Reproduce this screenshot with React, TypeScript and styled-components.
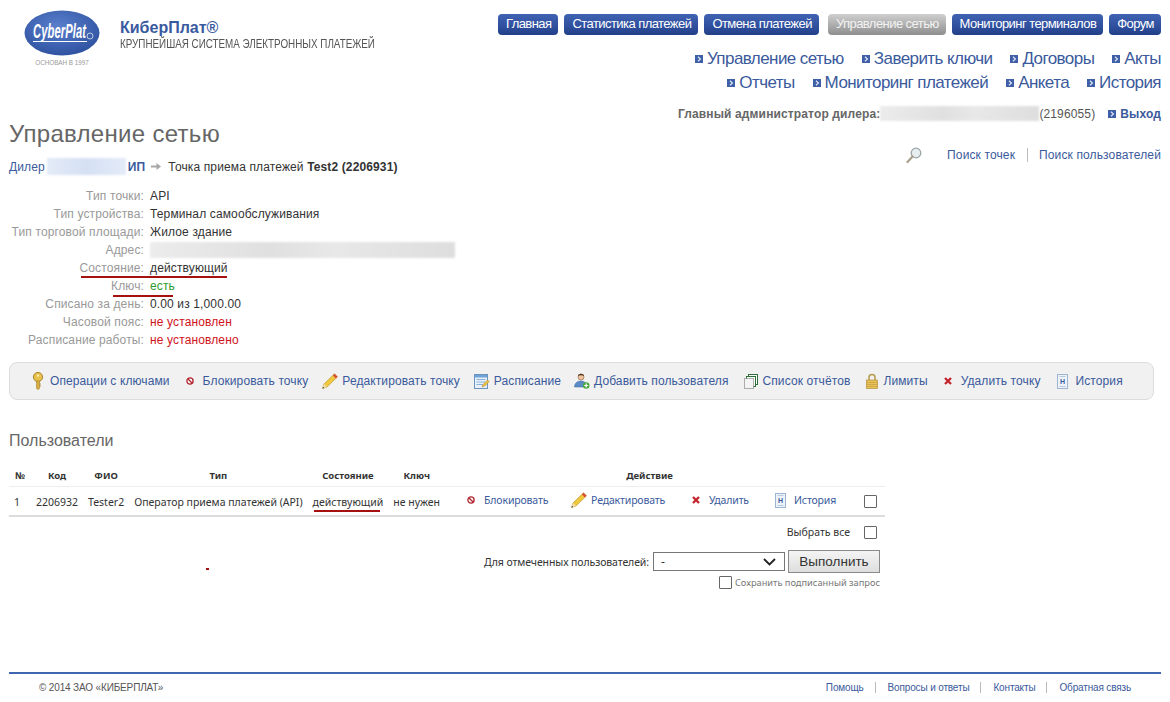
import React, { FC } from 'react';
import styled, { createGlobalStyle } from 'styled-components';

const GlobalStyle = createGlobalStyle`
  html, body {
    margin: 0;
    padding: 0;
    background: #fff;
  }
  body {
    font-family: "Liberation Sans", Arial, sans-serif;
    font-size: 12px;
    letter-spacing: 0.13px;
    color: #333;
  }
  a {
    color: #3a5a9c;
    text-decoration: none;
  }
`;

const Page = styled.div`
  box-sizing: border-box;
  display: flex;
  flex-direction: column;
  width: 1170px;
  height: 702px;
  padding: 0 9px;
  overflow: hidden;
  position: relative;
`;

const Header = styled.header`
  display: flex;
  justify-content: space-between;
  flex: none;
  height: 121px;
`;

const Brand = styled.div`
  display: flex;
  gap: 20px;
  padding: 10px 0 0 15px;
`;

const LogoBox = styled.div`
  width: 76px;
  display: flex;
  flex-direction: column;
  align-items: center;
`;

const Founded = styled.div`
  font-size: 6.3px;
  line-height: 10px;
  margin-top: 2px;
  letter-spacing: 0;
  color: #999;
`;

const BrandText = styled.div`
  padding-top: 10px;
`;

const BrandName = styled.div`
  font-size: 16px;
  line-height: 16px;
  font-weight: 700;
  letter-spacing: 0;
  color: #3a5aa0;
`;

const BrandSub = styled.div`
  font-size: 12px;
  line-height: 12px;
  margin-top: 2px;
  letter-spacing: 0;
  white-space: nowrap;
  color: #555;
  transform: scaleX(0.82);
  transform-origin: left center;
`;

const HeaderRight = styled.div`
  display: flex;
  flex-direction: column;
  align-items: flex-end;
  padding-top: 14px;
`;

const MainNav = styled.nav`
  display: flex;
  gap: 6px;
`;

const NavButton = styled.a<{ $active?: boolean; $push?: boolean }>`
  display: block;
  height: 21px;
  line-height: 20px;
  padding: 0 7px 0 8px;
  margin-left: ${(p) => (p.$push ? '3px' : '0')};
  border-radius: 4px;
  color: ${(p) => (p.$active ? '#f2f2f2' : '#fff')};
  font-size: 13px;
  letter-spacing: -0.56px;
  background: ${(p) =>
    p.$active
      ? 'linear-gradient(#cfcfcf, #a8a8a8 60%, #8e8e8e)'
      : 'linear-gradient(#3f62b2, #2f4f9e 60%, #223f86)'};
`;

const SubNav = styled.div`
  display: flex;
  justify-content: flex-end;
  gap: 18px;
  font-size: 17px;
  line-height: 24px;
  letter-spacing: -0.57px;
`;

const SubNavFirst = styled(SubNav)`
  margin-top: 12px;
`;

const BulletLink = styled.a`
  display: flex;
  align-items: center;
  gap: 4px;
`;

const UserLine = styled.div`
  display: flex;
  align-items: center;
  margin-top: 11px;
  line-height: 14px;
  color: #555;
`;

const UserRole = styled.b`
  color: #666;
`;

const Blurred = styled.span<{ $w: number; $h?: number; $blue?: boolean }>`
  display: inline-block;
  flex: none;
  width: ${(p) => p.$w}px;
  height: ${(p) => p.$h ?? 15}px;
  background: ${(p) =>
    p.$blue
      ? 'linear-gradient(to right, #e4ebf8, #d5e0f4 50%, #e4ebf8)'
      : 'linear-gradient(to right, #ececec, #e0e0e0 40%, #e8e8e8 60%, #dedede)'};
  filter: blur(1px);
`;

const LogoutLink = styled.a`
  display: flex;
  align-items: center;
  gap: 4px;
  margin-left: 13px;
  font-weight: 700;
`;

const TitleRow = styled.div`
  display: flex;
  justify-content: space-between;
`;

const Title = styled.h1`
  margin: 0;
  font-size: 24px;
  line-height: 26px;
  font-weight: 400;
  letter-spacing: 0.3px;
  color: #666;
`;

const Crumbs = styled.div`
  display: flex;
  align-items: center;
  gap: 2px;
  margin-top: 11px;
  line-height: 14px;
  color: #333;
`;

const CrumbArrow = styled.svg`
  margin: 0 5px 0 4px;
`;

const Search = styled.div`
  display: flex;
  align-items: center;
  padding-top: 27px;
  height: 14px;
`;

const SearchLink = styled.a<{ $divider?: boolean }>`
  line-height: 14px;
  margin-left: ${(p) => (p.$divider ? '12px' : '25px')};
  padding-left: ${(p) => (p.$divider ? '11px' : '0')};
  border-left: ${(p) => (p.$divider ? '1px solid #bbb' : 'none')};
`;

const InfoList = styled.dl`
  margin: 12px 0 0;
  display: grid;
  grid-template-columns: 135px auto;
  grid-auto-rows: 18.04px;
  column-gap: 6px;
  width: 460px;
  line-height: 18px;
`;

const InfoLabel = styled.dt`
  color: #999;
  text-align: right;
  white-space: nowrap;
`;

const InfoValue = styled.dd<{ $tone?: 'ok' | 'bad' }>`
  margin: 0;
  color: ${(p) => (p.$tone === 'ok' ? '#2e9a2e' : p.$tone === 'bad' ? '#d0121b' : '#333')};
  display: flex;
  align-items: center;
`;

/* red pen marks drawn over the screenshot content */
const PenMark = styled.div<{ $w: number; $h: number; $top: number; $left: number }>`
  position: absolute;
  top: ${(p) => p.$top}px;
  left: ${(p) => p.$left}px;
  width: ${(p) => p.$w}px;
  height: ${(p) => p.$h}px;
  background: #a5110f;
`;

const Toolbar = styled.div`
  box-sizing: border-box;
  display: flex;
  align-items: center;
  flex: none;
  width: 1145px;
  height: 38px;
  margin-top: 13px;
  padding: 0 0 0 22px;
  border: 1px solid #ddd;
  border-radius: 8px;
  background: #f1f1f1;
  letter-spacing: 0.1px;
`;

const ToolItem = styled.a<{ $gap: number; $ml: number }>`
  display: flex;
  align-items: center;
  gap: ${(p) => p.$gap}px;
  margin-left: ${(p) => p.$ml}px;
  white-space: nowrap;
`;

const SectionTitle = styled.h2`
  margin: 32px 0 0;
  font-size: 16px;
  line-height: 18px;
  font-weight: 400;
  letter-spacing: 0;
  color: #666;
`;

const Table = styled.table`
  align-self: flex-start;
  border-collapse: collapse;
  margin-top: 17px;
  font-family: "Noto Sans", sans-serif;
  font-size: 10.5px;
  letter-spacing: 0;
`;

const Th = styled.th<{ $w?: number }>`
  box-sizing: border-box;
  height: 19px;
  width: ${(p) => (p.$w ? `${p.$w}px` : 'auto')};
  padding: 0 5px 3px;
  font-size: 9.5px;
  font-weight: 700;
  color: #333;
  text-align: center;
  white-space: nowrap;
  border-bottom: 1px solid #eee;
`;

const Td = styled.td`
  box-sizing: border-box;
  height: 30px;
  padding: 1px 5px 0;
  color: #333;
  white-space: nowrap;
  border-bottom: 2px solid #ddd;
`;

const ActionTd = styled(Td)`
  padding: 0 0 0 22px;
`;

const CheckTd = styled(Td)`
  padding: 0 8px 0 10px;
`;

const Actions = styled.div`
  display: flex;
  align-items: center;
  margin-top: -2px;
  letter-spacing: -0.15px;
`;

const ActionLink = styled.a<{ $w: number; $gap: number }>`
  display: flex;
  align-items: center;
  gap: ${(p) => p.$gap}px;
  width: ${(p) => p.$w}px;
`;

const Check = styled.span`
  box-sizing: border-box;
  display: block;
  flex: none;
  width: 13px;
  height: 13px;
  background: #fff;
  border: 1px solid #666;
  border-radius: 1px;
`;

const BulkArea = styled.div`
  display: flex;
  flex-direction: column;
  align-items: flex-end;
  width: 871px;
  font-family: "Noto Sans", sans-serif;
  font-size: 10.5px;
  letter-spacing: 0;
  color: #333;
`;

const SelectAll = styled.div`
  display: flex;
  align-items: center;
  gap: 14px;
  height: 14px;
  margin-top: 8px;
  padding-right: 3px;
`;

const BulkRow = styled.div`
  display: flex;
  align-items: center;
  margin-top: 11px;
`;

const BulkLabel = styled.span`
  letter-spacing: -0.1px;
`;

const FakeSelect = styled.div`
  box-sizing: border-box;
  display: flex;
  align-items: center;
  justify-content: space-between;
  width: 132px;
  height: 19px;
  margin: 0 3px 0 4px;
  padding: 0 8px 0 7px;
  border: 1px solid #777;
  background: #fff;
  font-size: 12px;
`;

const RunButton = styled.button`
  box-sizing: border-box;
  width: 92px;
  height: 23px;
  padding: 0;
  border: 1px solid #8a8a8a;
  background: linear-gradient(#f4f4f4, #dedede);
  color: #333;
  font-family: "Liberation Sans", Arial, sans-serif;
  font-size: 13.5px;
`;

const SaveSigned = styled.div`
  display: flex;
  align-items: center;
  gap: 3px;
  margin-top: 3px;
  font-size: 9.25px;
  color: #777;
`;

const Footer = styled.footer`
  display: flex;
  justify-content: space-between;
  align-items: flex-start;
  flex: none;
  box-sizing: border-box;
  height: 30px;
  margin-top: auto;
  padding: 8px 30px 0;
  border-top: 2px solid #3f67b0;
  font-size: 10px;
  line-height: 11px;
  letter-spacing: -0.15px;
  color: #555;
`;

const FooterLinks = styled.div`
  display: flex;
`;

const FooterLink = styled.a`
  padding: 0 11px 0 12px;
  border-left: 1px solid #bbb;
  &:first-child {
    border-left: none;
  }
  &:last-child {
    padding-right: 0;
  }
`;

const Logo: FC = () => (
  <svg width="76" height="46" viewBox="0 0 76 46">
    <defs>
      <radialGradient id="lg" cx="45%" cy="35%" r="70%">
        <stop offset="0" stopColor="#5a80cc" />
        <stop offset="1" stopColor="#2c4f9e" />
      </radialGradient>
    </defs>
    <ellipse cx="38" cy="23" rx="37.5" ry="22.5" fill="url(#lg)" />
    <text
      transform="translate(9 28) scale(0.86 1.5)"
      fontFamily="Liberation Sans"
      fontSize="13"
      fontStyle="italic"
      fontWeight="700"
      fill="#fff"
    >
      CyberPlat
    </text>
    <circle cx="66" cy="26" r="3" fill="none" stroke="#dfe6f5" strokeWidth="0.8" />
    <rect x="9" y="31" width="54" height="1" fill="#fff" />
  </svg>
);

const Bullet: FC = () => (
  <svg width="8" height="8" viewBox="0 0 8 8">
    <rect width="8" height="8" fill="#3f5fa8" />
    <path d="M3 1.800l2.400 2.200L3 6.200" fill="none" stroke="#dfe6f5" strokeWidth="1.200" />
  </svg>
);

const KeyIcon: FC = () => (
  <svg width="12" height="18" viewBox="0 0 12 18">
    <circle cx="6" cy="5" r="4.600" fill="#e8c14e" stroke="#a8842a" />
    <circle cx="6" cy="3.600" r="1.100" fill="#fff3c4" />
    <path d="M4.600 9h2.800v7.600L6 17.600l-1.400-1z" fill="#dcb243" stroke="#a8842a" strokeWidth="0.700" />
    <path d="M7.400 12h1.400M7.400 14h1.400" stroke="#a8842a" />
  </svg>
);

const BanIcon: FC = () => (
  <svg width="8" height="8" viewBox="0 0 8 8">
    <circle cx="4" cy="4" r="3.100" fill="#fff" stroke="#b0252f" strokeWidth="1.300" />
    <path d="M2 2l4 4" stroke="#b0252f" strokeWidth="1.200" />
  </svg>
);

const PencilIcon: FC = () => (
  <svg width="16" height="16" viewBox="0 0 16 16">
    <path d="M0.500 15.500l1.500-4.500L12.500 0.800l3 3L5 14z" fill="#f0c83e" stroke="#b58f24" strokeWidth="0.600" />
    <path d="M12.500 0.800l3 3-1.600 1.600-3-3z" fill="#d94f3f" />
    <path d="M0.500 15.500l1.500-4.500 3 3z" fill="#f6e0b0" />
    <path d="M0.500 15.500l0.600-1.800 1.200 1.200z" fill="#333" />
  </svg>
);

const ScheduleIcon: FC = () => (
  <svg width="16" height="16" viewBox="0 0 16 16">
    <rect x="0.500" y="1.500" width="13" height="14" fill="#e8f1fb" stroke="#6b93bd" />
    <rect x="1" y="2" width="12" height="2.500" fill="#6ea3d8" />
    <path d="M2.500 6.500h9M2.500 9h9M2.500 11.500h9" stroke="#8ab0d6" />
    <path d="M8 14l1-2.500 4.500-4.500 1.700 1.700L10.700 13z" fill="#efc443" stroke="#a8842a" strokeWidth="0.500" />
  </svg>
);

const UserAddIcon: FC = () => (
  <svg width="16" height="16" viewBox="0 0 16 16">
    <circle cx="7" cy="4" r="3" fill="#edc3a0" stroke="#8a5a3a" strokeWidth="0.600" />
    <path d="M4 3c0-3 6-3 6 0-2-1-4-1-6 0z" fill="#5a3a24" />
    <path d="M0.500 14c0-4 3-6 6.500-6s5 2 5 4v2z" fill="#5b8bc4" stroke="#3b6aa3" strokeWidth="0.500" />
    <circle cx="12.200" cy="12.500" r="3.300" fill="#49a83e" />
    <path d="M12.200 10.500v4M10.200 12.500h4" stroke="#fff" strokeWidth="1.200" />
  </svg>
);

const CopiesIcon: FC = () => (
  <svg width="14" height="15" viewBox="0 0 14 15">
    <rect x="4.500" y="0.500" width="9" height="10" fill="#fff" stroke="#2f6f3a" />
    <rect x="2.500" y="2.500" width="9" height="10" fill="#fff" stroke="#2f6f3a" />
    <rect x="0.500" y="4.500" width="9" height="10" fill="#f4f4f4" stroke="#666" strokeDasharray="1 1" />
  </svg>
);

const LockIcon: FC = () => (
  <svg width="14" height="16" viewBox="0 0 14 16">
    <path d="M4 7V4.500a3 3 0 0 1 6 0V7" fill="none" stroke="#b79a4a" strokeWidth="1.500" />
    <rect x="1.500" y="7" width="11" height="8.500" fill="#e9c25a" stroke="#a8842a" strokeWidth="0.600" />
    <path d="M2 9.500h10M2 11.500h10M2 13.500h10" stroke="#c49e3c" strokeWidth="0.700" />
  </svg>
);

const CrossIcon: FC = () => (
  <svg width="8" height="8" viewBox="0 0 8 8">
    <path d="M1 1l6 6M7 1L1 7" stroke="#c4242c" strokeWidth="2.300" />
  </svg>
);

const HistoryIcon: FC = () => (
  <svg width="11" height="15" viewBox="0 0 11 15">
    <rect x="0.500" y="0.500" width="10" height="14" fill="#eef3fa" stroke="#9db4d2" />
    <path d="M2.500 2.500h6M2.500 12.500h6" stroke="#b9c9de" />
    <text x="5.500" y="10" textAnchor="middle" fontFamily="Liberation Sans" fontSize="7" fontWeight="700" fill="#3a5a9c">
      H
    </text>
  </svg>
);

const MagnifierIcon: FC = () => (
  <svg width="16" height="17" viewBox="0 0 16 17">
    <circle cx="10" cy="6" r="4.800" fill="#e8eef0" stroke="#9aa5a8" strokeWidth="1.300" />
    <path d="M6.500 9.500L1.500 15" stroke="#a8a08c" strokeWidth="2.200" strokeLinecap="round" />
  </svg>
);

const Chevron: FC = () => (
  <svg width="13" height="8" viewBox="0 0 13 8">
    <path d="M1 1l5.500 5.500L12 1" fill="none" stroke="#222" strokeWidth="1.800" />
  </svg>
);

const topLinks = [
  { label: 'Главная' },
  { label: 'Статистика платежей' },
  { label: 'Отмена платежей' },
  { label: 'Управление сетью', active: true, push: true },
  { label: 'Мониторинг терминалов' },
  { label: 'Форум' },
];

const info: { label: string; value: React.ReactNode; tone?: 'ok' | 'bad' }[] = [
  { label: 'Тип точки:', value: 'API' },
  { label: 'Тип устройства:', value: 'Терминал самообслуживания' },
  { label: 'Тип торговой площади:', value: 'Жилое здание' },
  { label: 'Адрес:', value: <Blurred $w={305} $h={16} /> },
  { label: 'Состояние:', value: 'действующий' },
  { label: 'Ключ:', value: 'есть', tone: 'ok' },
  { label: 'Списано за день:', value: '0.00 из 1,000.00' },
  { label: 'Часовой пояс:', value: 'не установлен', tone: 'bad' },
  { label: 'Расписание работы:', value: 'не установлено', tone: 'bad' },
];

const tools = [
  { icon: <KeyIcon />, label: 'Операции с ключами', gap: 6, ml: 0 },
  { icon: <BanIcon />, label: 'Блокировать точку', gap: 9, ml: 16 },
  { icon: <PencilIcon />, label: 'Редактировать точку', gap: 4, ml: 14 },
  { icon: <ScheduleIcon />, label: 'Расписание', gap: 4, ml: 14 },
  { icon: <UserAddIcon />, label: 'Добавить пользователя', gap: 4, ml: 13 },
  { icon: <CopiesIcon />, label: 'Список отчётов', gap: 5, ml: 15 },
  { icon: <LockIcon />, label: 'Лимиты', gap: 4, ml: 15 },
  { icon: <CrossIcon />, label: 'Удалить точку', gap: 9, ml: 16 },
  { icon: <HistoryIcon />, label: 'История', gap: 8, ml: 16 },
];

export default function App() {
  return (
    <Page>
      <GlobalStyle />
      <Header>
        <Brand>
          <LogoBox>
            <Logo />
            <Founded>ОСНОВАН В 1997</Founded>
          </LogoBox>
          <BrandText>
            <BrandName>КиберПлат®</BrandName>
            <BrandSub>КРУПНЕЙШАЯ СИСТЕМА ЭЛЕКТРОННЫХ ПЛАТЕЖЕЙ</BrandSub>
          </BrandText>
        </Brand>
        <HeaderRight>
          <MainNav>
            {topLinks.map((l) => (
              <NavButton key={l.label} $active={l.active} $push={l.push}>
                {l.label}
              </NavButton>
            ))}
          </MainNav>
          <SubNavFirst>
            {['Управление сетью', 'Заверить ключи', 'Договоры', 'Акты'].map((t) => (
              <BulletLink key={t}>
                <Bullet />
                {t}
              </BulletLink>
            ))}
          </SubNavFirst>
          <SubNav>
            {['Отчеты', 'Мониторинг платежей', 'Анкета', 'История'].map((t) => (
              <BulletLink key={t}>
                <Bullet />
                {t}
              </BulletLink>
            ))}
          </SubNav>
          <UserLine>
            <UserRole>Главный администратор дилера:</UserRole>
            <Blurred $w={159} />
            (2196055)
            <LogoutLink>
              <Bullet />
              Выход
            </LogoutLink>
          </UserLine>
        </HeaderRight>
      </Header>

      <TitleRow>
        <div>
          <Title>Управление сетью</Title>
          <Crumbs>
            <a>Дилер</a>
            <Blurred $w={79} $h={17} $blue />
            <a>
              <b>ИП</b>
            </a>
            <CrumbArrow width="10" height="7" viewBox="0 0 10 7">
              <path d="M0 2.500h5.500V0L10 3.500 5.500 7V4.500H0z" fill="#a8a8a8" />
            </CrumbArrow>
            <span>
              Точка приема платежей <b>Test2 (2206931)</b>
            </span>
          </Crumbs>
        </div>
        <Search>
          <MagnifierIcon />
          <SearchLink>Поиск точек</SearchLink>
          <SearchLink $divider>Поиск пользователей</SearchLink>
        </Search>
      </TitleRow>

      <InfoList>
        {info.map((row) => (
          <React.Fragment key={row.label}>
            <InfoLabel>{row.label}</InfoLabel>
            <InfoValue $tone={row.tone}>{row.value}</InfoValue>
          </React.Fragment>
        ))}
      </InfoList>
      <PenMark $left={81} $top={276} $w={146} $h={2} />
      <PenMark $left={113} $top={295} $w={60} $h={2} />

      <Toolbar>
        {tools.map((t) => (
          <ToolItem key={t.label} $gap={t.gap} $ml={t.ml}>
            {t.icon}
            {t.label}
          </ToolItem>
        ))}
      </Toolbar>

      <SectionTitle>Пользователи</SectionTitle>
      <Table>
        <thead>
          <tr>
            <Th $w={22}>№</Th>
            <Th>Код</Th>
            <Th>ФИО</Th>
            <Th>Тип</Th>
            <Th>Состояние</Th>
            <Th>Ключ</Th>
            <Th>Действие</Th>
            <Th $w={31} />
          </tr>
        </thead>
        <tbody>
          <tr>
            <Td>1</Td>
            <Td>2206932</Td>
            <Td>Tester2</Td>
            <Td>Оператор приема платежей (API)</Td>
            <Td>действующий</Td>
            <Td>не нужен</Td>
            <ActionTd>
              <Actions>
                <ActionLink $w={104} $gap={9}>
                  <BanIcon />
                  Блокировать
                </ActionLink>
                <ActionLink $w={121} $gap={4}>
                  <PencilIcon />
                  Редактировать
                </ActionLink>
                <ActionLink $w={83} $gap={9}>
                  <CrossIcon />
                  Удалить
                </ActionLink>
                <ActionLink $w={79} $gap={8}>
                  <HistoryIcon />
                  История
                </ActionLink>
              </Actions>
            </ActionTd>
            <CheckTd>
              <Check />
            </CheckTd>
          </tr>
        </tbody>
      </Table>
      <PenMark $left={314} $top={510} $w={66} $h={2} />
      <PenMark $left={206} $top={568} $w={3} $h={2} />

      <BulkArea>
        <SelectAll>
          Выбрать все
          <Check />
        </SelectAll>
        <BulkRow>
          <BulkLabel>Для отмеченных пользователей:</BulkLabel>
          <FakeSelect>
            -
            <Chevron />
          </FakeSelect>
          <RunButton>Выполнить</RunButton>
        </BulkRow>
        <SaveSigned>
          <Check />
          Сохранить подписанный запрос
        </SaveSigned>
      </BulkArea>

      <Footer>
        <span>© 2014 ЗАО «КИБЕРПЛАТ»</span>
        <FooterLinks>
          <FooterLink>Помощь</FooterLink>
          <FooterLink>Вопросы и ответы</FooterLink>
          <FooterLink>Контакты</FooterLink>
          <FooterLink>Обратная связь</FooterLink>
        </FooterLinks>
      </Footer>
    </Page>
  );
}
